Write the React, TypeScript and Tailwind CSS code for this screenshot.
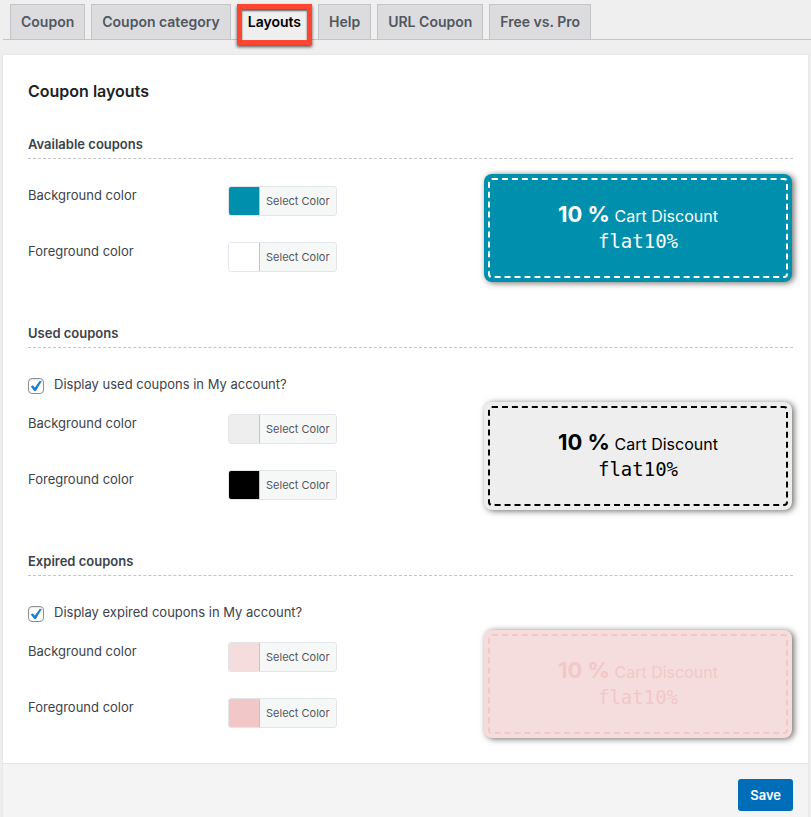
import { useId } from "react";
import clsx from "clsx";

const tabs = ["Coupon", "Coupon category", "Layouts", "Help", "URL Coupon", "Free vs. Pro"];

type Section = {
  title: string;
  toggle?: string;
  swatches: [string, string];
  card: string;
};

const sections: Section[] = [
  {
    title: "Available coupons",
    swatches: ["bg-[#0090ae]", "bg-white"],
    card: "bg-[#0090ae] text-white",
  },
  {
    title: "Used coupons",
    toggle: "Display used coupons in My account?",
    swatches: ["bg-[#eeeeee]", "bg-black"],
    card: "bg-[#eeeeee] text-black",
  },
  {
    title: "Expired coupons",
    toggle: "Display expired coupons in My account?",
    swatches: ["bg-[#f6dddd]", "bg-[#f2c7c7]"],
    card: "bg-[#f6dddd] text-[#f2c7c7]",
  },
];

function Tab({ name, active }: { name: string; active: boolean }) {
  return (
    <a
      href="#"
      aria-current={active ? "page" : undefined}
      className={clsx(
        "relative h-9 border px-2.5 pt-[5px] text-sm leading-6 font-semibold whitespace-nowrap",
        active
          ? "border-[#c3c4c7] border-b-[#efefef] bg-[#efefef] text-black"
          : "border-[#c3c4c7] bg-[#dcdcde] text-[#50575e]",
      )}
    >
      {name}
      {active && (
        <span className="absolute -inset-x-px -top-px -bottom-1.5 border-[5px] border-[#fe4532] shadow-[0_2px_3px_rgba(0,0,0,0.65),inset_0_2px_2px_rgba(0,0,0,0.6)]" />
      )}
    </a>
  );
}

function ColorRow({ label, swatch }: { label: string; swatch: string }) {
  const id = useId();
  return (
    <div className="flex items-start">
      <label htmlFor={id} className="w-[200px] shrink-0 leading-[18px]">
        {label}
      </label>
      <button
        id={id}
        type="button"
        className="flex h-[30px] overflow-hidden rounded-[3px] border border-[#e2e6ea] bg-[#f6f7f7] text-[11px] leading-7 text-[#50575e]"
      >
        <span className={clsx("w-[30px]", swatch)} />
        <span className="border-l border-[#c3c4c7] px-1.5 whitespace-nowrap">Select Color</span>
      </button>
    </div>
  );
}

function Checkbox({ label }: { label: string }) {
  return (
    <label className="flex h-4 items-start gap-2.5 leading-3">
      <span className="relative size-4 shrink-0">
        <input
          type="checkbox"
          defaultChecked
          className="peer block size-4 appearance-none rounded-[4px] border border-[#8c8f94] bg-white shadow-[inset_0_1px_2px_rgba(0,0,0,0.1)]"
        />
        <svg
          viewBox="0 0 16 16"
          className="pointer-events-none absolute inset-0 hidden size-4 peer-checked:block"
          fill="#1b7fd0"
        >
          <path d="M2.8 8.4 4.8 7.2 6.9 9.4 11.6 3 13.8 3.1 7.9 13 6.2 13Z" />
        </svg>
      </span>
      {label}
    </label>
  );
}

function CouponCard({ className }: { className: string }) {
  return (
    <div
      className={clsx(
        "h-[108px] w-[308px] shrink-0 rounded-lg p-1 shadow-[2px_1px_6px_rgba(10,10,0,0.6)]",
        className,
      )}
    >
      <div className="flex h-full flex-col items-center rounded-[4px] border-2 border-dashed border-current pt-5">
        <div className="text-base leading-7">
          <strong className="text-[22px] font-bold">10 %</strong> Cart Discount
        </div>
        <div className="font-['DejaVu_Sans_Mono',monospace] text-[19px] leading-[22px]">flat10%</div>
      </div>
    </div>
  );
}

function CouponSection({ title, toggle, swatches, card }: Section) {
  return (
    <section>
      <h3 className="border-b border-dashed border-[#c3c4c7] pb-1 font-semibold">{title}</h3>
      <div className="flex justify-between pr-px">
        <div className={toggle ? "pt-[30px]" : "pt-[27px]"}>
          {toggle && (
            <div className="mb-5">
              <Checkbox label={toggle} />
            </div>
          )}
          <div className="flex flex-col gap-[26px]">
            <ColorRow label="Background color" swatch={swatches[0]} />
            <ColorRow label="Foreground color" swatch={swatches[1]} />
          </div>
        </div>
        <div className={toggle ? "pt-[54px]" : "pt-[15px]"}>
          <CouponCard className={card} />
        </div>
      </div>
    </section>
  );
}

export default function App() {
  return (
    <div className="flex min-h-screen flex-col bg-[#efefef] pt-1 pl-[3px] font-[Inter,sans-serif] text-[13px] leading-5 text-[#3c434a]">
      <nav className="flex h-9 gap-1.5 border-b border-[#c3c4c7] pl-[7px]">
        {tabs.map((name) => (
          <Tab key={name} name={name} active={name === "Layouts"} />
        ))}
      </nav>
      <form
        onSubmit={(event) => event.preventDefault()}
        className="mt-[15px] mr-[3px] flex grow flex-col bg-white shadow-[0_0_1px_1px_#e8e8e8]"
      >
        <div className="pt-6 pr-[15px] pb-[25px] pl-[25px]">
          <h2 className="mb-[31px] text-base leading-6 font-semibold text-[#1d2327]">Coupon layouts</h2>
          <div className="flex flex-col gap-[41px]">
            {sections.map((section) => (
              <CouponSection key={section.title} {...section} />
            ))}
          </div>
        </div>
        <footer className="flex grow items-start justify-end border-t border-[#e5e5e5] bg-[#f4f4f4] pt-[15px] pr-[15px] pb-1.5">
          <button
            type="submit"
            className="h-8 rounded-[3px] bg-[#006db9] px-3 font-semibold text-white"
          >
            Save
          </button>
        </footer>
      </form>
    </div>
  );
}
